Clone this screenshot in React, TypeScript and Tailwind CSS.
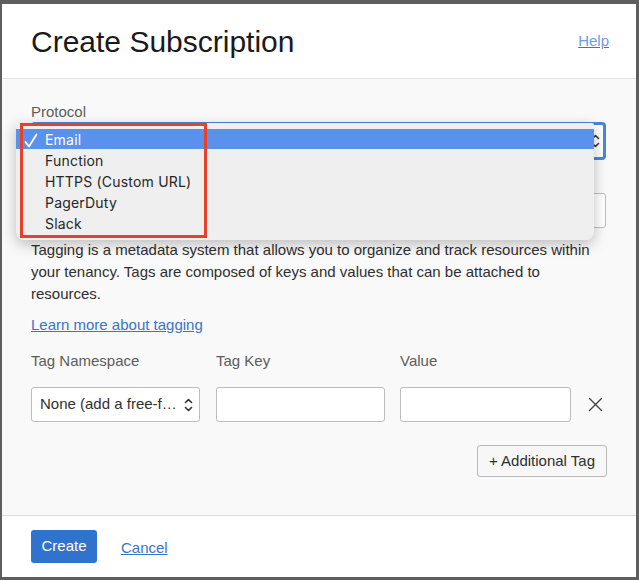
import React from "react";

const font = { fontFamily: '"Liberation Sans", Arial, sans-serif' };

function UpDown({ className }: { className?: string }) {
  return (
    <svg className={className} width="9" height="16" viewBox="0 0 9 16" fill="none" stroke="#333" strokeWidth="1.6" strokeLinecap="round" strokeLinejoin="round">
      <path d="M1.5 5.5 L4.5 2.5 L7.5 5.5" />
      <path d="M1.5 10.5 L4.5 13.5 L7.5 10.5" />
    </svg>
  );
}

export default function App() {
  return (
    <div className="min-h-[580px] w-[639px] bg-[#5e5e5e] pt-[4px] pl-[2px] pr-[3px] pb-[3px]" style={font}>
      <div className="relative w-[634px] h-[573px] bg-white flex flex-col overflow-visible">
        {/* header */}
        <div className="h-[75px] border-b border-[#e3e3e3] flex items-center justify-between pl-[29px] pr-[30px] shrink-0">
          <h1 className="text-[30px] leading-[36px] text-[#1a1a1a] mt-[2px]">Create Subscription</h1>
          <a className="text-[15px] text-[#6f9be0] underline decoration-[#3a74c9] mr-[-3px]">Help</a>
        </div>
        {/* body */}
        <div className="relative bg-[#f9f9f9] pl-[29px] pr-[28px] pt-[23px] pb-[38px] flex flex-col flex-1">
          <div className="text-[15px] leading-[20px] text-[#5c5c5c]">Protocol</div>
          <div className="h-[38px] w-[575px] rounded-[4px] border-[3px] border-[#4a86d8] bg-white flex items-center justify-end pr-[3px]">
            <UpDown />
          </div>
          <div className="mt-[12px] text-[15px] leading-[20px] text-[#5c5c5c]">Email</div>
          <div className="mt-[1px] h-[35px] w-[575px] rounded-[3px] border border-[#bdbdbd] bg-white" />
          <p className="mt-[11px] text-[15px] leading-[22px] text-[#2f2f2f] w-[570px]">
            Tagging is a metadata system that allows you to organize and track resources within your tenancy. Tags are composed of keys and values that can be attached to resources.
          </p>
          <a className="mt-[9px] text-[15px] leading-[22px] text-[#3a74c9] underline self-start">Learn more about tagging</a>
          <div className="mt-[15px] flex text-[15px] leading-[20px] text-[#5c5c5c]">
            <div className="w-[185px]">Tag Namespace</div>
            <div className="w-[184px]">Tag Key</div>
            <div>Value</div>
          </div>
          <div className="mt-[16px] flex items-center">
            <div className="h-[35px] w-[169px] rounded-[3px] border border-[#bdbdbd] bg-white flex items-center justify-between pl-[8px] pr-[6px] text-[15px] text-[#2f2f2f] gap-[2px]">
              <span className="whitespace-nowrap">None (add a free-f…</span>
              <UpDown className="shrink-0" />
            </div>
            <div className="ml-[16px] h-[35px] w-[169px] rounded-[3px] border border-[#bdbdbd] bg-white" />
            <div className="ml-[15px] h-[35px] w-[171px] rounded-[3px] border border-[#bdbdbd] bg-white" />
            <svg className="ml-[17px]" width="15" height="15" viewBox="0 0 15 15" stroke="#444" strokeWidth="1.4" strokeLinecap="round">
              <path d="M1.5 1.5 L13.5 13.5 M13.5 1.5 L1.5 13.5" />
            </svg>
          </div>
          <div className="mt-[23px] flex justify-end pr-[1px]">
            <div className="h-[32px] px-[11px] rounded-[3px] border border-[#b8b8b8] bg-[#f7f7f7] flex items-center text-[15px] text-[#2f2f2f]">
              + Additional Tag
            </div>
          </div>

          {/* dropdown overlay */}
          <div
            className="absolute left-[14px] top-[44px] w-[578px] h-[117px] bg-[#efefef] rounded-b-[8px] rounded-t-[2px] shadow-[0_4px_14px_rgba(0,0,0,0.25)] pt-[6px]"
            style={{ fontFamily: 'Inter, "Noto Sans", sans-serif' }}
          >
            <div className="relative h-[20px] bg-[#5a91ec] flex items-center text-white text-[14px] tracking-[0.2px]">
              <svg className="absolute left-[8px] top-[4px]" width="14" height="15" viewBox="0 0 14 15" fill="none" stroke="#fff" strokeWidth="1.8" strokeLinecap="round" strokeLinejoin="round">
                <path d="M1.5 9 L5 13.5 L12.5 1.5" />
              </svg>
              <span className="pl-[29px]">Email</span>
            </div>
            <div className="pt-[1px]">
              {["Function", "HTTPS (Custom URL)", "PagerDuty", "Slack"].map((t) => (
                <div key={t} className="h-[21px] flex items-center pl-[29px] text-[14px] text-[#262626] tracking-[0.2px]">
                  {t}
                </div>
              ))}
            </div>
            <div className="absolute left-[4px] top-0 w-[187px] h-[115px] border-[3px] border-[#e5412b]" />
          </div>
        </div>
        {/* footer */}
        <div className="h-[62px] border-t border-[#dcdcdc] bg-white flex items-start pt-[14px] pl-[29px] shrink-0">
          <div className="h-[33px] w-[66px] rounded-[3px] bg-[#3073cf] text-white text-[15px] flex items-center justify-center">Create</div>
          <a className="ml-[24px] mt-[7px] text-[15px] text-[#3a74c9] underline">Cancel</a>
        </div>
      </div>
    </div>
  );
}
